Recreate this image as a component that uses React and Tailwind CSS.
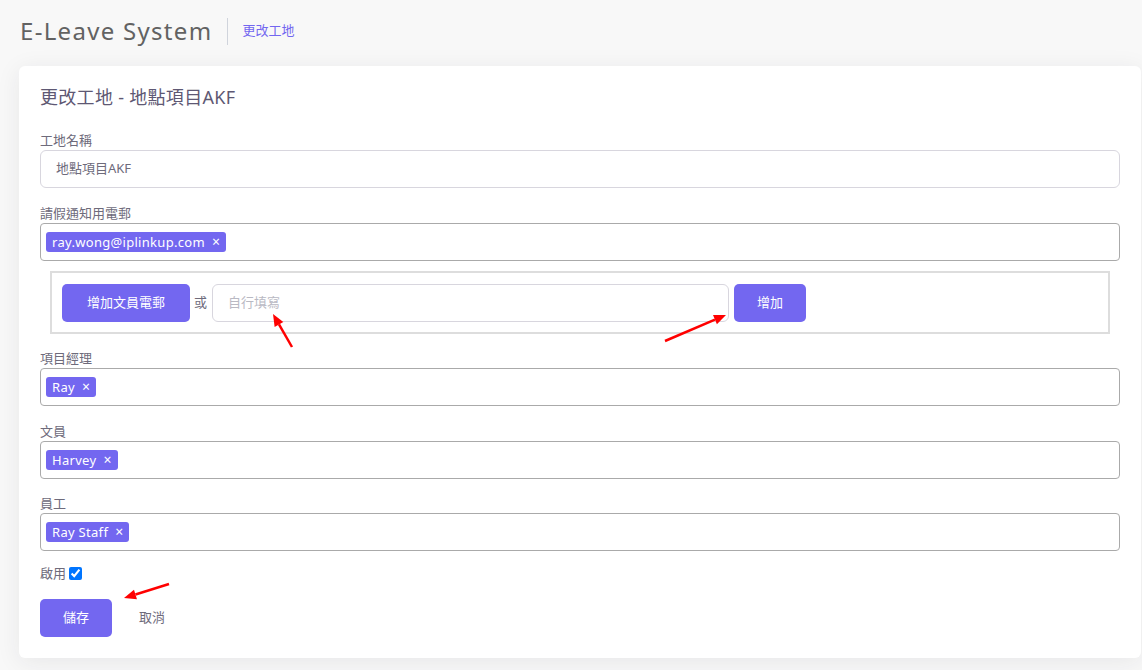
import React from "react";

const font = { fontFamily: '"Noto Sans", "Noto Sans CJK TC", sans-serif' };

function Tag({ children }) {
  return (
    <span className="inline-flex items-center h-[20px] px-[6px] rounded-[3px] bg-[#7367f0] text-white text-[13px] leading-none gap-[7px] tracking-[0.3px]">
      <span>{children}</span>
      <span className="text-[14px]">×</span>
    </span>
  );
}

function TagBox({ children }) {
  return (
    <div className="h-[38px] border border-[#aaaaaa] rounded-[4px] bg-white flex items-center px-[5px]">
      {children}
    </div>
  );
}

function Label({ children }) {
  return <div className="text-[13px] text-[#6e6b7b] leading-[18px] mb-[1px]">{children}</div>;
}

function Arrow({ x1, y1, x2, y2 }) {
  const dx = x2 - x1, dy = y2 - y1;
  const len = Math.sqrt(dx * dx + dy * dy);
  const ux = dx / len, uy = dy / len;
  const hl = 12, hw = 5;
  const bx = x2 - ux * hl, by = y2 - uy * hl;
  const p1 = `${bx - uy * hw},${by + ux * hw}`;
  const p2 = `${bx + uy * hw},${by - ux * hw}`;
  return (
    <g>
      <line x1={x1} y1={y1} x2={bx} y2={by} stroke="#ff0000" strokeWidth="2.5" />
      <polygon points={`${x2},${y2} ${p1} ${p2}`} fill="#ff0000" />
    </g>
  );
}

export default function App() {
  return (
    <div className="relative w-[1142px] h-[670px] bg-[#f8f8f8] overflow-hidden" style={font}>
      <div className="h-[66px] flex items-center pl-[20px] pb-[4px]">
        <div className="text-[24px] text-[#626262] leading-none tracking-[1.3px]">E-Leave System</div>
        <div className="w-px h-[27px] bg-[#d0d4dc] ml-[15px] mr-[14px]" />
        <div className="text-[13px] text-[#7367f0]">更改工地</div>
      </div>
      <div className="ml-[19px] w-[1122px] h-[592px] bg-white rounded-[6px] shadow-[0_4px_24px_0_rgba(34,41,47,0.08)] px-[21px] pt-[18px]">
        <div className="text-[18px] text-[#5e5873] leading-[26px] tracking-[0.3px]">更改工地 - 地點項目AKF</div>
        <div className="mt-[21px]">
          <Label>工地名稱</Label>
          <div className="h-[38px] border border-[#d8d6de] rounded-[6px] flex items-center px-[15px] text-[13px] text-[#6e6b7b]">
            地點項目AKF
          </div>
        </div>
        <div className="mt-[16px]">
          <Label>請假通知用電郵</Label>
          <TagBox>
            <Tag>ray.wong@iplinkup.com</Tag>
          </TagBox>
        </div>
        <div className="mx-[10px] mt-[10px] h-[63px] border-2 border-[#dddddd] flex items-center px-[10px] gap-[4px]">
          <button className="h-[38px] w-[128px] rounded-[5px] bg-[#7367f0] text-white text-[13px]">增加文員電郵</button>
          <span className="text-[13px] text-[#6e6b7b]">或</span>
          <div className="ml-[1px] h-[38px] w-[517px] border border-[#d8d6de] rounded-[6px] flex items-center px-[15px] text-[13px] text-[#b9b9c3]">
            自行填寫
          </div>
          <button className="ml-[1px] h-[38px] w-[72px] rounded-[5px] bg-[#7367f0] text-white text-[13px]">增加</button>
        </div>
        <div className="mt-[15px]">
          <Label>項目經理</Label>
          <TagBox>
            <Tag>Ray</Tag>
          </TagBox>
        </div>
        <div className="mt-[16px]">
          <Label>文員</Label>
          <TagBox>
            <Tag>Harvey</Tag>
          </TagBox>
        </div>
        <div className="mt-[15px]">
          <Label>員工</Label>
          <TagBox>
            <Tag>Ray Staff</Tag>
          </TagBox>
        </div>
        <div className="mt-[13px] flex items-center gap-[3px] text-[13px] text-[#6e6b7b] leading-[18px]">
          <span>啟用</span>
          <input type="checkbox" defaultChecked className="w-[13px] h-[13px] accent-[#0075ff]" />
        </div>
        <div className="mt-[17px] flex items-center">
          <button className="h-[38px] w-[72px] rounded-[5px] bg-[#7367f0] text-white text-[13px]">儲存</button>
          <span className="ml-[27px] text-[13px] text-[#6e6b7b]">取消</span>
        </div>
      </div>
      <svg className="absolute left-0 top-0 pointer-events-none" width="1142" height="670">
        <Arrow x1={292} y1={347} x2={273} y2={314} />
        <Arrow x1={665} y1={341} x2={726} y2={315} />
        <Arrow x1={169} y1={584} x2={124} y2={598} />
      </svg>
    </div>
  );
}
